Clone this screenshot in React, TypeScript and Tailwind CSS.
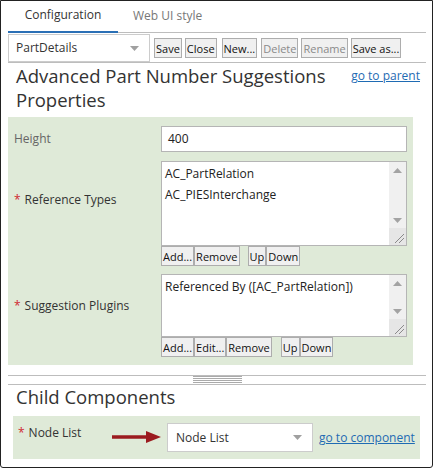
import React from "react";

const Btn = ({ children, disabled, className = "" }: { children: React.ReactNode; disabled?: boolean; className?: string }) => (
  <div
    className={`h-[20px] flex items-center px-[1px] border border-[#adadad] bg-[#f0f0f0] text-[11px] leading-none whitespace-nowrap ${disabled ? "text-[#8a8a8a]" : "text-[#111]"} ${className}`}
  >
    {children}
  </div>
);

const Caret = () => (
  <svg width="9" height="5" viewBox="0 0 9 5" className="shrink-0">
    <path d="M0 0 H9 L4.5 5 Z" fill="#a0a0a0" />
  </svg>
);

const ListBox = ({ h, items }: { h: number; items: string[] }) => (
  <div className="relative border border-[#b5b5b5] bg-white flex" style={{ height: h }}>
    <div className="flex-1 pl-[3px] pt-[1px] text-[12px] text-[#222] leading-[21px]">
      {items.map((t) => (
        <div key={t}>{t}</div>
      ))}
    </div>
    <div className="w-[17px] bg-[#f0f0f0] flex flex-col items-center">
      <svg width="9" height="5" viewBox="0 0 9 5" className="mt-[6px]">
        <path d="M0 5 H9 L4.5 0 Z" fill="#a3a3a3" />
      </svg>
      <div className="flex-1" />
      <svg width="9" height="5" viewBox="0 0 9 5" className="mb-[22px]">
        <path d="M0 0 H9 L4.5 5 Z" fill="#a3a3a3" />
      </svg>
    </div>
    <div className="absolute right-0 bottom-0 w-[17px] h-[17px] bg-[#e6e6e6]">
      <svg width="17" height="17" viewBox="0 0 17 17">
        <path d="M6 15 L15 6 M10 15 L15 10" stroke="#8a8a8a" strokeWidth="1" />
      </svg>
    </div>
  </div>
);

export default function App() {
  return (
    <div className="w-[433px] h-[468px] border border-[#222] rounded-b-[3px] bg-white font-['Open_Sans',sans-serif] text-[#222] pl-[7px] pr-[6px] overflow-hidden">
      {/* tabs */}
      <div className="h-[32px] flex border-b border-[#bdbdbd]">
        <div className="w-[110px] flex items-center justify-center pb-[2px] text-[12px] text-[#333] border-b-2 border-[#2a6fb5] -mb-[1px]">
          Configuration
        </div>
        <div className="px-[15px] flex items-center pb-[2px] text-[12px] text-[#777]">Web UI style</div>
      </div>
      {/* toolbar */}
      <div className="h-[30px] flex items-start border-b border-[#bdbdbd]">
        <div className="mt-[1px] w-[142px] h-[28px] border border-[#ccc] flex items-center pl-[7px] pr-[10px] text-[12px] text-[#333]">
          <span className="flex-1">PartDetails</span>
          <Caret />
        </div>
        <div className="flex gap-[3px] ml-[4px] mt-[5px]">
          <Btn>Save</Btn>
          <Btn>Close</Btn>
          <Btn className="ml-[2px]">New...</Btn>
          <Btn disabled className="ml-[1px]">Delete</Btn>
          <Btn disabled>Rename</Btn>
          <Btn>Save as...</Btn>
        </div>
      </div>
      {/* title */}
      <div className="flex pt-[1px] pl-[8px] pr-[6px]">
        <div className="flex-1 text-[18.5px] leading-[24px] text-[#333]">
          Advanced Part Number Suggestions
          <br />
          Properties
        </div>
        <a className="text-[12px] text-[#1f6bb3] underline mt-[3px] shrink-0">go to parent</a>
      </div>
      {/* properties panel */}
      <div className="mt-[5px] w-[405px] bg-[#dfead8] pt-[9px] pb-[8px] pl-[6px] pr-[6px]">
        <div className="flex items-center">
          <div className="w-[147px] text-[12px] text-[#666]">Height</div>
          <div className="flex-1 h-[26px] border border-[#b5b5b5] bg-white flex items-center pl-[6px] text-[12px] text-[#222]">
            400
          </div>
        </div>
        <div className="flex mt-[9px]">
          <div className="w-[147px] h-[78px] flex items-center text-[12px] text-[#333]">
            <span className="text-[#d0262f] mr-[4px]">*</span>Reference Types
          </div>
          <div className="flex-1">
            <ListBox h={85} items={["AC_PartRelation", "AC_PIESInterchange"]} />
            <div className="flex">
              <Btn>Add...</Btn>
              <Btn>Remove</Btn>
              <Btn className="ml-[8px]">Up</Btn>
              <Btn>Down</Btn>
            </div>
          </div>
        </div>
        <div className="flex mt-[8px]">
          <div className="w-[147px] h-[63px] flex items-center text-[12px] text-[#333]">
            <span className="text-[#d0262f] mr-[4px]">*</span>Suggestion Plugins
          </div>
          <div className="flex-1">
            <ListBox h={63} items={["Referenced By ([AC_PartRelation])"]} />
            <div className="flex">
              <Btn>Add...</Btn>
              <Btn>Edit...</Btn>
              <Btn>Remove</Btn>
              <Btn className="ml-[9px]">Up</Btn>
              <Btn>Down</Btn>
            </div>
          </div>
        </div>
      </div>
      {/* splitter */}
      <div className="mt-[10px] h-[10px] border-t border-b border-[#bdbdbd] flex justify-center">
        <div className="w-[49px] flex flex-col gap-[1px]">
          <div className="h-[1px] bg-[#aaa]" />
          <div className="h-[1px] bg-[#aaa]" />
          <div className="h-[1px] bg-[#aaa]" />
          <div className="h-[1px] bg-[#aaa]" />
        </div>
      </div>
      {/* child components */}
      <div className="pl-[8px] text-[18.5px] leading-[24px] text-[#333]">Child Components</div>
      <div className="mt-[7px] ml-[5px] w-[407px] bg-[#dfead8] pt-[7px] pb-[7px] pl-[5px] flex items-start">
        <div className="w-[94px] text-[12px] text-[#333] pt-[1px]">
          <span className="text-[#d0262f] mr-[4px]">*</span>Node List
        </div>
        <svg width="50" height="14" viewBox="0 0 50 14" className="mt-[7px]">
          <path d="M0 7 H36" stroke="#9b1b1f" strokeWidth="3.5" />
          <path d="M34 1 L49 7 L34 13 Z" fill="#9b1b1f" />
        </svg>
        <div className="ml-[5px] w-[146px] h-[29px] border border-[#ccc] bg-white flex items-center pl-[8px] pr-[10px] text-[12px] text-[#333]">
          <span className="flex-1">Node List</span>
          <Caret />
        </div>
        <a className="ml-[6px] mt-[6px] text-[12px] text-[#1f6bb3] underline whitespace-nowrap">go to component</a>
      </div>
    </div>
  );
}
